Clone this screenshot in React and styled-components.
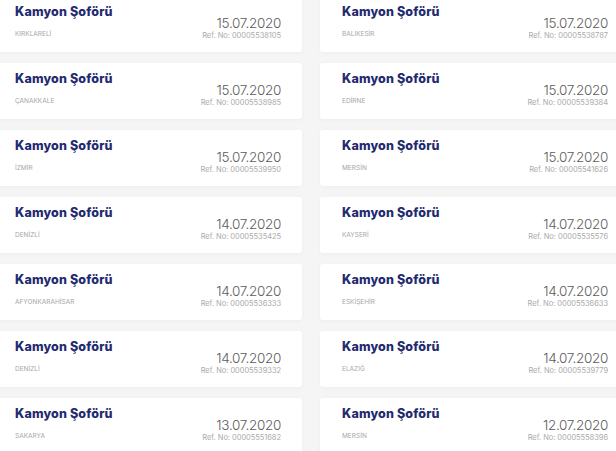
import React from "react";
import styled, { createGlobalStyle } from "styled-components";

const Global = createGlobalStyle`
  html, body { margin: 0; padding: 0; background: #f5f5f6; overflow: hidden; }
  body { font-family: Inter, "Open Sans", sans-serif; }
`;

const Grid = styled.div`
  display: grid;
  grid-template-columns: 309px 309px;
  column-gap: 18px;
  row-gap: 11px;
  margin-left: -7px;
  margin-top: -4px;
`;

const Card = styled.div`
  height: 56px;
  box-sizing: border-box;
  background: #ffffff;
  border-radius: 3px;
  box-shadow: 0 1px 4px rgba(0, 0, 0, 0.035);
  padding: 7px 21px 11.5px 22px;
  display: flex;
  justify-content: space-between;
`;

const Left = styled.div`
  display: flex;
  flex-direction: column;
  justify-content: space-between;
`;

const Right = styled.div`
  display: flex;
  flex-direction: column;
  justify-content: flex-end;
  align-items: flex-end;
`;

const Title = styled.div`
  font-family: Inter, sans-serif;
  font-weight: 800;
  font-size: 12.5px;
  line-height: 18px;
  color: #1f2a6f;
  letter-spacing: 0.15px;
`;

const City = styled.div`
  font-size: 6.5px;
  line-height: 9px;
  color: #a6a6a6;
  text-transform: uppercase;
  margin-bottom: 1.5px;
`;

const DateText = styled.div`
  font-size: 13.5px;
  line-height: 15px;
  font-weight: 300;
  color: #5c5c5c;
  letter-spacing: -0.3px;
`;

const Ref = styled.div`
  font-size: 7.5px;
  line-height: 10px;
  color: #ababab;
  letter-spacing: -0.05px;
`;

const items = [
  ["KIRKLARELİ", "15.07.2020", "00005538105"],
  ["BALIKESİR", "15.07.2020", "00005538787"],
  ["ÇANAKKALE", "15.07.2020", "00005538985"],
  ["EDİRNE", "15.07.2020", "00005539384"],
  ["İZMİR", "15.07.2020", "00005539950"],
  ["MERSİN", "15.07.2020", "00005541626"],
  ["DENİZLİ", "14.07.2020", "00005535425"],
  ["KAYSERİ", "14.07.2020", "00005535576"],
  ["AFYONKARAHİSAR", "14.07.2020", "00005536333"],
  ["ESKİŞEHİR", "14.07.2020", "00005536633"],
  ["DENİZLİ", "14.07.2020", "00005539332"],
  ["ELAZIĞ", "14.07.2020", "00005539779"],
  ["SAKARYA", "13.07.2020", "00005551682"],
  ["MERSİN", "12.07.2020", "00005558396"],
];

export default function App() {
  return (
    <>
      <Global />
      <Grid>
        {items.map(([city, date, ref], i) => (
          <Card key={i}>
            <Left>
              <Title>Kamyon Şoförü</Title>
              <City>{city}</City>
            </Left>
            <Right>
              <DateText>{date}</DateText>
              <Ref>Ref. No: {ref}</Ref>
            </Right>
          </Card>
        ))}
      </Grid>
    </>
  );
}
